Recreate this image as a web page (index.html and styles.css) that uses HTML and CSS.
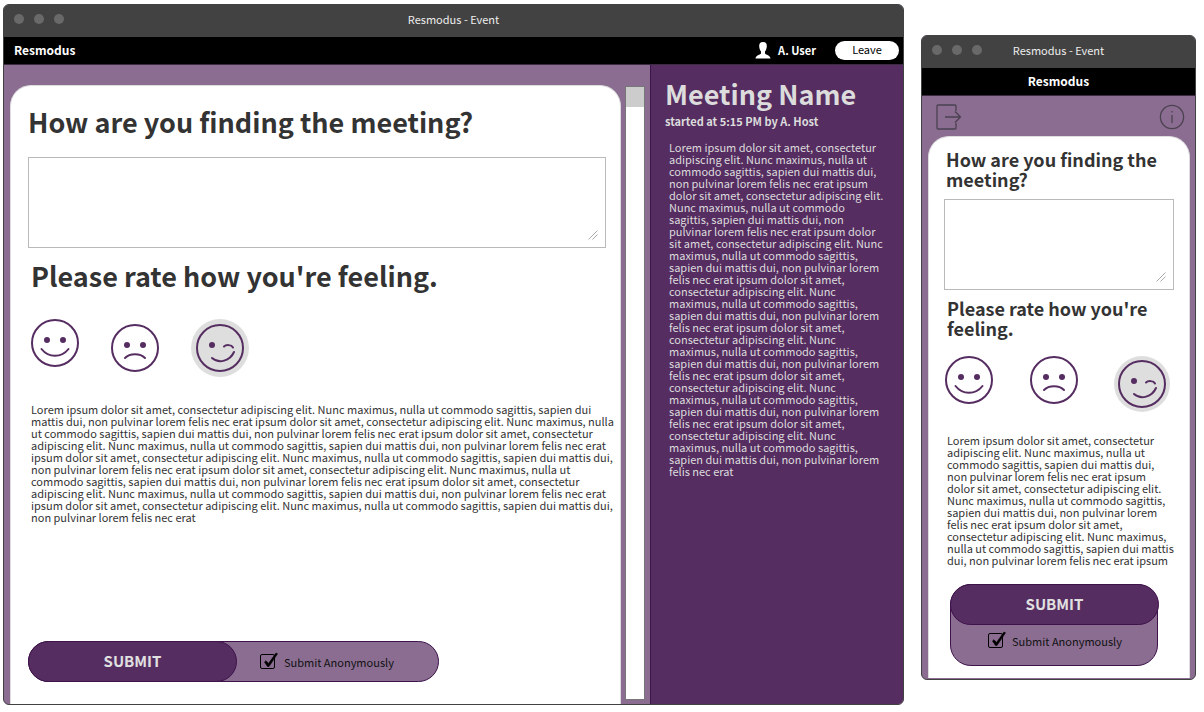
FILE: index.html
```
<!DOCTYPE html>
<html lang="en">
<head>
<meta charset="utf-8">
<title>Resmodus - Event</title>
<link rel="stylesheet" href="styles.css">
</head>
<body>
<svg class="symbols" aria-hidden="true">
  <symbol id="face-happy" viewBox="0 0 48 48">
    <g fill="none" stroke="currentColor" stroke-width="2" stroke-linecap="round"><circle cx="24" cy="24" r="23"/><path d="M10.500 30 C17.500 39 30.500 39 37.500 30"/></g>
    <g fill="currentColor"><circle cx="16" cy="21" r="3"/><circle cx="32" cy="21" r="3"/></g>
  </symbol>
  <symbol id="face-sad" viewBox="0 0 48 48">
    <g fill="none" stroke="currentColor" stroke-width="2" stroke-linecap="round"><circle cx="24" cy="24" r="23"/><path d="M14 34 C19 29 29 29 34 34"/></g>
    <g fill="currentColor"><circle cx="16" cy="21" r="3"/><circle cx="32" cy="21" r="3"/></g>
  </symbol>
  <symbol id="face-wink" viewBox="0 0 48 48">
    <g fill="none" stroke="currentColor" stroke-width="2" stroke-linecap="round"><circle cx="24" cy="24" r="23"/><path d="M16 34 C23 40 34 37 38 28"/><path d="M28 22.500 C30 20.500 35.500 20.500 37 23.500"/></g>
    <circle cx="16" cy="21" r="3" fill="currentColor"/>
  </symbol>
  <symbol id="grip" viewBox="0 0 10 10">
    <path d="M0.500 9.500 L9.500 0.500 M4.500 9.500 L9.500 4.500" fill="none" stroke="#aaa" stroke-width="1"/>
  </symbol>
  <symbol id="tick" viewBox="0 0 18 18">
    <path d="M4.500 10 L6 8.700 L8.500 11.500 L16 1 L17.500 1.800 L9 14.500 L7.500 14.500 Z" fill="#000" stroke="#000" stroke-width="0.600"/>
  </symbol>
</svg>

<section class="window desktop">
  <div class="titlebar">
    <div class="dots"><i></i><i></i><i></i></div>
    <span>Resmodus - Event</span>
  </div>
  <header class="appbar">
    <strong class="brand">Resmodus</strong>
    <svg class="user-icon" viewBox="0 0 16 17"><path fill="#fff" d="M8 0 C5 0 4 2 4.200 4.500 C4.400 7 5.200 8.500 6 9.500 V11.500 C5 13 1 13 0.500 16.500 H15.500 C15 13 11 13 10 11.500 V9.500 C10.800 8.500 11.600 7 11.800 4.500 C12 2 11 0 8 0 Z"/></svg>
    <strong class="user">A. User</strong>
    <button class="leave" type="button">Leave</button>
  </header>
  <div class="body">
    <main class="stage">
      <form class="card">
        <h1><label for="answer-wide">How are you finding the meeting?</label></h1>
        <div class="answer">
          <textarea id="answer-wide"></textarea>
          <svg class="grip"><use href="#grip"/></svg>
        </div>
        <section class="rating">
          <h2>Please rate how you're feeling.</h2>
          <div class="faces" role="radiogroup" aria-label="Feeling">
            <label class="face"><input type="radio" name="wide" aria-label="Happy"><svg><use href="#face-happy"/></svg></label>
            <label class="face"><input type="radio" name="wide" aria-label="Sad"><svg><use href="#face-sad"/></svg></label>
            <label class="face selected"><input type="radio" name="wide" aria-label="Winking" checked><svg><use href="#face-wink"/></svg></label>
          </div>
          <p>Lorem ipsum dolor sit amet, consectetur adipiscing elit. Nunc maximus, nulla ut commodo sagittis, sapien dui mattis dui, non pulvinar lorem felis nec erat ipsum dolor sit amet, consectetur adipiscing elit. Nunc maximus, nulla ut commodo sagittis, sapien dui mattis dui, non pulvinar lorem felis nec erat ipsum dolor sit amet, consectetur adipiscing elit. Nunc maximus, nulla ut commodo sagittis, sapien dui mattis dui, non pulvinar lorem felis nec erat ipsum dolor sit amet, consectetur adipiscing elit. Nunc maximus, nulla ut commodo sagittis, sapien dui mattis dui, non pulvinar lorem felis nec erat ipsum dolor sit amet, consectetur adipiscing elit. Nunc maximus, nulla ut commodo sagittis, sapien dui mattis dui, non pulvinar lorem felis nec erat ipsum dolor sit amet, consectetur adipiscing elit. Nunc maximus, nulla ut commodo sagittis, sapien dui mattis dui, non pulvinar lorem felis nec erat ipsum dolor sit amet, consectetur adipiscing elit. Nunc maximus, nulla ut commodo sagittis, sapien dui mattis dui, non pulvinar lorem felis nec erat</p>
        </section>
        <div class="actions">
          <button class="submit" type="button">SUBMIT</button>
          <label class="anon"><span class="check"><input type="checkbox" checked><svg><use href="#tick"/></svg></span>Submit Anonymously</label>
        </div>
      </form>
      <div class="track"><div class="thumb"></div></div>
    </main>
    <aside class="info">
      <h2>Meeting Name</h2>
      <strong>started at 5:15 PM by A. Host</strong>
      <p>Lorem ipsum dolor sit amet, consectetur adipiscing elit. Nunc maximus, nulla ut commodo sagittis, sapien dui mattis dui, non pulvinar lorem felis nec erat ipsum dolor sit amet, consectetur adipiscing elit. Nunc maximus, nulla ut commodo sagittis, sapien dui mattis dui, non pulvinar lorem felis nec erat ipsum dolor sit amet, consectetur adipiscing elit. Nunc maximus, nulla ut commodo sagittis, sapien dui mattis dui, non pulvinar lorem felis nec erat ipsum dolor sit amet, consectetur adipiscing elit. Nunc maximus, nulla ut commodo sagittis, sapien dui mattis dui, non pulvinar lorem felis nec erat ipsum dolor sit amet, consectetur adipiscing elit. Nunc maximus, nulla ut commodo sagittis, sapien dui mattis dui, non pulvinar lorem felis nec erat ipsum dolor sit amet, consectetur adipiscing elit. Nunc maximus, nulla ut commodo sagittis, sapien dui mattis dui, non pulvinar lorem felis nec erat ipsum dolor sit amet, consectetur adipiscing elit. Nunc maximus, nulla ut commodo sagittis, sapien dui mattis dui, non pulvinar lorem felis nec erat</p>
    </aside>
  </div>
</section>

<section class="window mobile">
  <div class="titlebar">
    <div class="dots"><i></i><i></i><i></i></div>
    <span>Resmodus - Event</span>
  </div>
  <header class="appbar"><strong class="brand">Resmodus</strong></header>
  <main class="stage">
    <nav class="tools">
      <button type="button" aria-label="Leave"><svg viewBox="0 0 26 26"><path d="M20 7 V2 Q20 1 19 1 H2 Q1 1 1 2 V24 Q1 25 2 25 H19 Q20 25 20 24 V19 M9 13 H24.500 M19 7.500 L24.500 13 L19 18.500"/></svg></button>
      <button type="button" aria-label="Info"><svg viewBox="0 0 26 26"><circle cx="13" cy="13" r="11.600"/><path d="M13 11 V19 M13 7 V8.500"/></svg></button>
    </nav>
    <form class="card">
      <h1><label for="answer-narrow">How are you finding the meeting?</label></h1>
      <div class="answer">
        <textarea id="answer-narrow"></textarea>
        <svg class="grip"><use href="#grip"/></svg>
      </div>
      <section class="rating">
        <h2>Please rate how you're feeling.</h2>
        <div class="faces" role="radiogroup" aria-label="Feeling">
          <label class="face"><input type="radio" name="narrow" aria-label="Happy"><svg><use href="#face-happy"/></svg></label>
          <label class="face"><input type="radio" name="narrow" aria-label="Sad"><svg><use href="#face-sad"/></svg></label>
          <label class="face selected"><input type="radio" name="narrow" aria-label="Winking" checked><svg><use href="#face-wink"/></svg></label>
        </div>
        <p>Lorem ipsum dolor sit amet, consectetur adipiscing elit. Nunc maximus, nulla ut commodo sagittis, sapien dui mattis dui, non pulvinar lorem felis nec erat ipsum dolor sit amet, consectetur adipiscing elit. Nunc maximus, nulla ut commodo sagittis, sapien dui mattis dui, non pulvinar lorem felis nec erat ipsum dolor sit amet, consectetur adipiscing elit. Nunc maximus, nulla ut commodo sagittis, sapien dui mattis dui, non pulvinar lorem felis nec erat ipsum</p>
      </section>
      <div class="actions">
        <button class="submit" type="button">SUBMIT</button>
        <label class="anon"><span class="check"><input type="checkbox" checked><svg><use href="#tick"/></svg></span>Submit Anonymously</label>
      </div>
    </form>
  </main>
</section>
</body>
</html>
```
FILE: styles.css
```
* { box-sizing: border-box; }

body {
  margin: 0;
  padding: 4px 8px 7px 3px;
  min-height: 100vh;
  display: grid;
  grid-template-columns: minmax(0, 1fr) 275px;
  gap: 17px;
  background: #fff;
  color: #333;
  font: 11px/12px "Noto Sans CJK SC", "Noto Sans", sans-serif;
}

h1, h2, p { margin: 0; }
button, textarea { font: inherit; }
button { cursor: pointer; }
svg { display: block; }
.symbols { display: none; }

.window {
  display: flex;
  flex-direction: column;
  border: 1px solid #424242;
  border-radius: 6px;
  overflow: hidden;
  background: #8a6d91;
}

.titlebar {
  display: grid;
  grid-template-columns: 1fr auto 1fr;
  align-items: center;
  height: 32px;
  padding: 0 10px 4px;
  background: #424242;
  color: #eee;
}

.dots { display: flex; gap: 10px; }
.dots i { width: 10px; height: 10px; border-radius: 50%; background: #696969; }

.appbar {
  display: flex;
  align-items: center;
  height: 28px;
  padding: 0 4px 1px 10px;
  background: #000;
  border-bottom: 1px solid #3c2b40;
  color: #fff;
}

.brand { font-size: 12px; }
.user-icon { width: 16px; height: 17px; margin-left: auto; }
.user { margin: 0 19px 0 7px; }

.leave {
  width: 64px;
  height: 19px;
  padding: 0 0 2px;
  border: 0;
  border-radius: 10px;
  background: #fff;
  color: #000;
}

.body { flex: 1; display: flex; }

.card {
  display: flex;
  flex-direction: column;
  background: #fff;
  border: 1px solid #ddd;
  border-bottom: 0;
}

.answer { position: relative; }

.answer textarea {
  display: block;
  width: 100%;
  height: 91px;
  padding: 8px;
  border: 1px solid #b9b9b9;
  background: #fff;
  resize: none;
}

.grip {
  position: absolute;
  right: 8px;
  bottom: 8px;
  width: 10px;
  height: 10px;
}

.faces { display: flex; align-items: flex-start; }
.face { display: block; border-radius: 50%; color: #562d61; }
.face svg { width: 48px; height: 48px; }
.face input { position: absolute; opacity: 0; }
.selected { background: #dedede; }

.actions {
  display: flex;
  background: #8a6d91;
  border: 1px solid #3d134a;
  border-radius: 21px;
}

.submit {
  width: 209px;
  height: 41px;
  margin: -1px;
  padding: 0 0 2px;
  border: 1px solid #3d134a;
  border-radius: 21px;
  background: #562d61;
  color: #e0e0e0;
  font-size: 15px;
  font-weight: bold;
}

.anon { display: flex; align-items: center; gap: 9px; color: #111; }
.check { position: relative; width: 15px; height: 15px; }

.check input {
  appearance: none;
  display: block;
  width: 15px;
  height: 15px;
  margin: 0;
  border: 1px solid #000;
  border-radius: 2px;
}

.check svg {
  position: absolute;
  left: 0;
  top: -2px;
  width: 18px;
  height: 18px;
  pointer-events: none;
}

.desktop .stage {
  flex: 1;
  display: flex;
  gap: 4px;
  padding: 20px 5px 0 6px;
}

.desktop .card {
  flex: 1;
  padding: 16px 0 22px 17px;
  border-radius: 21px 21px 0 0;
}

.desktop h1, .desktop h2 { font-size: 27px; line-height: 40px; }
.desktop .answer { margin: 15px 14px 0 0; }
.desktop .rating { padding: 8px 3px 0; }
.desktop .faces { gap: 32px; margin: 23px 0 26px; }
.desktop .face:nth-child(2) { align-self: center; }
.desktop .selected { padding: 5px; }
.desktop .actions { width: 411px; margin-top: auto; }
.desktop .anon { margin-left: 24px; }

.track {
  width: 20px;
  margin: 1px 0 4px;
  border: 1px solid #777;
  background: #fff;
}

.thumb { height: 20px; background: #ccc; }

.info {
  width: 253px;
  padding: 9px 16px 20px 14px;
  border-left: 1px solid #3d134a;
  background: #562d61;
  color: #dcdcdc;
}

.info strong { display: block; margin-top: 1px; }
.info p { padding: 14px 0 0 4px; }

.mobile { margin: 31px 0 25px; }
.mobile .appbar { justify-content: center; padding: 0 0 1px; }
.mobile .stage { flex: 1; display: flex; flex-direction: column; padding: 8px 5px 1px 6px; }

.tools { display: flex; justify-content: space-between; padding: 0 5px 6px 8px; }

.tools button {
  width: 26px;
  height: 26px;
  padding: 0;
  border: 0;
  background: none;
}

.tools svg { fill: none; stroke: #4b4150; stroke-width: 1.3; }

.mobile .card { flex: 1; padding: 12px 14px 12px 15px; border-radius: 21px 21px 0 0; }
.mobile h1, .mobile h2 { font-size: 18px; line-height: 20px; }
.mobile h1 { padding-left: 2px; }
.mobile .answer { margin: 10px 1px 0 0; }
.mobile .rating { padding: 8px 0 0 3px; }
.mobile .faces { justify-content: space-between; margin: 18px 5px 22px -2px; }
.mobile .selected { padding: 4px; }
.mobile .actions { flex-direction: column; width: 208px; margin: 18px 0 0 6px; }
.mobile .anon { justify-content: center; height: 41px; padding: 0 0 8px 2px; }
```
